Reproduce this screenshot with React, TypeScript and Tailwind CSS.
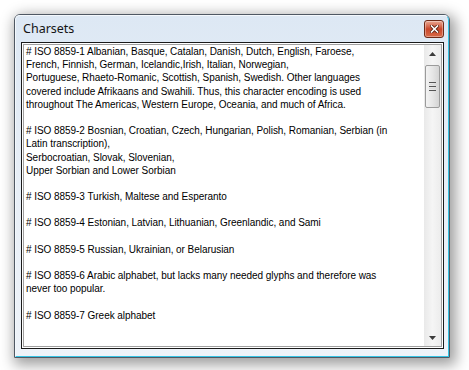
const lines = [
  "# ISO 8859-1 Albanian, Basque, Catalan, Danish, Dutch, English, Faroese,",
  "French, Finnish, German, Icelandic,Irish, Italian, Norwegian,",
  "Portuguese, Rhaeto-Romanic, Scottish, Spanish, Swedish. Other languages",
  "covered include Afrikaans and Swahili. Thus, this character encoding is used",
  "throughout The Americas, Western Europe, Oceania, and much of Africa.",
  "",
  "# ISO 8859-2 Bosnian, Croatian, Czech, Hungarian, Polish, Romanian, Serbian (in",
  "Latin transcription),",
  "Serbocroatian, Slovak, Slovenian,",
  "Upper Sorbian and Lower Sorbian",
  "",
  "# ISO 8859-3 Turkish, Maltese and Esperanto",
  "",
  "# ISO 8859-4 Estonian, Latvian, Lithuanian, Greenlandic, and Sami",
  "",
  "# ISO 8859-5 Russian, Ukrainian, or Belarusian",
  "",
  "# ISO 8859-6 Arabic alphabet, but lacks many needed glyphs and therefore was",
  "never too popular.",
  "",
  "# ISO 8859-7 Greek alphabet",
];

function CloseButton() {
  return (
    <button
      type="button"
      className="
        flex h-[18px] w-[20px] items-center justify-center
        rounded-[3px] border border-[#6e2a17]
        bg-gradient-to-b from-[#e9a892] via-[#c9462a] to-[#d86a48]
        shadow-[inset_0_0_0_1px_rgba(255,255,255,0.35)]
      "
    >
      <svg width="9" height="8" viewBox="0 0 9 8">
        <path
          d="M1.5 1 L7.5 7 M7.5 1 L1.5 7"
          stroke="#5a2010"
          strokeWidth="3.2"
          strokeLinecap="square"
        />
        <path
          d="M1.5 1 L7.5 7 M7.5 1 L1.5 7"
          stroke="#ffffff"
          strokeWidth="1.6"
          strokeLinecap="square"
        />
      </svg>
    </button>
  );
}

function ScrollBar() {
  return (
    <div className="flex w-[17px] flex-col items-center bg-gradient-to-r from-[#e9e9e9] via-[#f5f5f5] to-[#ececec]">
      {/* Up arrow */}
      <div className="flex h-[17px] w-full items-center justify-center">
        <svg width="7" height="4" viewBox="0 0 7 4">
          <path d="M3.5 0 L7 4 L0 4 Z" fill="#3c3c3c" />
        </svg>
      </div>

      {/* Thumb */}
      <div
        className="
          mt-[3px] flex h-[43px] w-[15px] items-center justify-center
          rounded-[2px] border border-[#9b9b9b]
          bg-gradient-to-r from-[#f3f3f3] via-[#e6e6e6] to-[#d4d4d4]
        "
      >
        <div className="flex flex-col gap-[1px]">
          <div className="h-[1px] w-[7px] bg-[#555]" />
          <div className="h-[1px] w-[7px] bg-[#dcdcdc]" />
          <div className="h-[1px] w-[7px] bg-[#555]" />
          <div className="h-[1px] w-[7px] bg-[#dcdcdc]" />
          <div className="h-[1px] w-[7px] bg-[#555]" />
        </div>
      </div>

      <div className="flex-1" />

      {/* Down arrow */}
      <div className="flex h-[17px] w-full items-center justify-center">
        <svg width="7" height="4" viewBox="0 0 7 4">
          <path d="M0 0 L7 0 L3.5 4 Z" fill="#3c3c3c" />
        </svg>
      </div>
    </div>
  );
}

export default function App() {
  return (
    <div className="h-[370px] w-[469px] overflow-hidden bg-white pl-[14px] pt-[14px]">
      <div
        className="
          h-[344px] w-[436px] rounded-t-[6px]
          border border-[#4f5863]
          bg-gradient-to-b from-[#dde8f4] via-[#e8eff7] to-[#eef3f9]
          shadow-[3px_4px_14px_3px_rgba(0,0,0,0.38)]
        "
      >
        <div className="flex h-full flex-col rounded-t-[5px] border-b border-r border-[#35c3e4] border-t-[#f4f8fc] border-l-[#f4f8fc] border-t border-l">
          {/* Title bar */}
          <div className="flex h-[26px] items-center justify-between pl-[7px] pr-[4px]">
            <span
              className="text-[12.5px] text-[#141414]"
              style={{ fontFamily: "'Noto Sans', 'Open Sans', sans-serif" }}
            >
              Charsets
            </span>
            <CloseButton />
          </div>

          {/* Text box */}
          <div className="flex flex-1 flex-col pb-[7px] pl-[5px] pr-[4px]">
            <div className="flex flex-1 border border-[#1a1a1a] bg-white p-[1px]">
              <div className="flex flex-1 border border-[#a0a0a0] bg-white">
                <div
                  className="flex-1 overflow-hidden pl-[2px] pt-0 text-[10px] leading-[13.2px] tracking-[-0.05px] text-black"
                  style={{ fontFamily: "'Liberation Sans', Arial, sans-serif" }}
                >
                  {lines.map((line, i) => (
                    <div key={i} className="h-[13.2px] whitespace-nowrap">
                      {line}
                    </div>
                  ))}
                </div>
                <ScrollBar />
              </div>
            </div>
          </div>
        </div>
      </div>
    </div>
  );
}
